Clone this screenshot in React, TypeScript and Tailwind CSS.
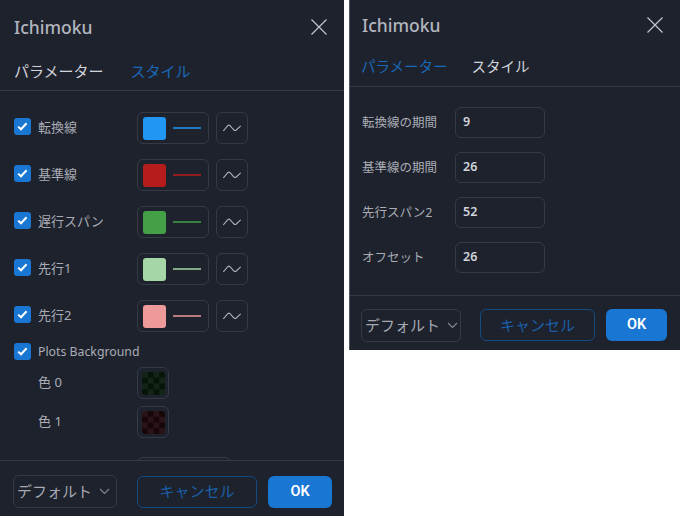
const FONT = "font-['Noto_Sans','Noto_Sans_CJK_JP',sans-serif]";

function CloseIcon() {
  return (
    <svg width="18" height="18" viewBox="0 0 18 18" fill="none" stroke="#c3c6ce" strokeWidth="1.2">
      <path d="M1.5 1.5l15 15M16.5 1.5l-15 15" />
    </svg>
  );
}

function Check({ className = "" }: { className?: string }) {
  return (
    <span className={`${className} flex h-[17px] w-[17px] items-center justify-center rounded-[3px] bg-[#1976d2]`}>
      <svg width="11" height="9" viewBox="0 0 11 9" fill="none" stroke="#ffffff" strokeWidth="2">
        <path d="M1.2 4.6l2.8 2.7 5.6-6" />
      </svg>
    </span>
  );
}

function Footer({ select, cancel, ok }: { select: string; cancel: string; ok: string }) {
  return (
    <div className="flex h-full items-center">
      <div className={`${select} flex h-[33px] items-center rounded-md border border-[#363a45] pl-[3px] text-[15px] text-[#a6a9b2]`}>
        <span className="whitespace-nowrap">デフォルト</span>
        <svg className="ml-[7px]" width="11" height="7" viewBox="0 0 11 7" fill="none" stroke="#868993" strokeWidth="1.1">
          <path d="M1 1l4.5 4.5L10 1" />
        </svg>
      </div>
      <button className={`${cancel} h-[32px] rounded-md border border-[#134a80] text-[15px] text-[#1a5fa8]`}>
        キャンセル
      </button>
      <button className={`${ok} h-[32px] rounded-md bg-[#1976d2] font-['Roboto',sans-serif] text-[14.5px] font-semibold text-white`}>
        OK
      </button>
    </div>
  );
}

function PlotRow({ label, color, mt }: { label: string; color: string; mt: string }) {
  return (
    <div className={`${mt} flex h-[32px] items-center`}>
      <Check className="mb-[3px]" />
      <span className="mb-[1px] ml-[7px] w-[99px] text-[13px] text-[#a9acb5]">{label}</span>
      <div className="flex h-[32px] w-[72px] items-center rounded-md border border-[#363a45] pl-[5px]">
        <span className="h-[23px] w-[23px] rounded-[3px]" style={{ backgroundColor: color }} />
        <span className="ml-[7px] h-[2px] w-[28px] opacity-75" style={{ backgroundColor: color }} />
      </div>
      <div className="ml-[7px] flex h-[32px] w-[32px] items-center justify-center rounded-md border border-[#363a45]">
        <svg width="18" height="8" viewBox="0 0 18 8" fill="none" stroke="#b2b5be" strokeWidth="1.1">
          <path d="M0.3 7L5 1.5Q6 0.8 7 1.6L11 6Q12 6.8 13 6.2L17.7 1.8" />
        </svg>
      </div>
    </div>
  );
}

function ColorRow({ label, mt, swatch }: { label: string; mt: string; swatch: string }) {
  return (
    <div className={`${mt} flex h-[32px] items-center`}>
      <span className="ml-[24px] w-[99px] text-[13px] text-[#a9acb5]">{label}</span>
      <div className="flex h-[32px] w-[32px] items-center justify-center rounded-md border border-[#363a45]">
        <span className={`${swatch} h-[23px] w-[23px] rounded-[3px] bg-[size:11.5px_11.5px]`} />
      </div>
    </div>
  );
}

function StylePanel() {
  return (
    <div className="flex h-[516px] w-[344px] shrink-0 flex-col bg-[#1e222d]">
      <div className="flex h-[54px] items-center justify-between pl-[14px] pr-[16px]">
        <span className="text-[17.5px] font-medium text-[#b2b5be]">Ichimoku</span>
        <CloseIcon />
      </div>
      <div className="flex h-[37px] items-center gap-[27px] border-b border-[#363a45] pb-[2px] pl-[14px] text-[15px]">
        <span className="text-[#d1d4dc]">パラメーター</span>
        <span className="text-[#1a68b8]">スタイル</span>
      </div>
      <div className="flex-1 overflow-hidden pl-[14px] pt-[21px]">
        <PlotRow label="転換線" color="#2196f3" mt="" />
        <PlotRow label="基準線" color="#b71c1c" mt="mt-[15px]" />
        <PlotRow label="遅行スパン" color="#43a047" mt="mt-[15px]" />
        <PlotRow label="先行1" color="#a5d6a7" mt="mt-[15px]" />
        <PlotRow label="先行2" color="#ef9a9a" mt="mt-[15px]" />
        <div className="mt-[11px] flex h-[17px] items-center">
          <Check />
          <span className="ml-[7px] pt-[1px] text-[12.3px] text-[#a9acb5]">Plots Background</span>
        </div>
        <ColorRow
          label="色 0"
          mt="mt-[7px]"
          swatch="bg-[repeating-conic-gradient(#071509_0_25%,#132516_0_50%)]"
        />
        <ColorRow
          label="色 1"
          mt="mt-[7px]"
          swatch="bg-[repeating-conic-gradient(#170709_0_25%,#2a1417_0_50%)]"
        />
        <div className="ml-[123px] mt-[19px] h-[32px] w-[94px] rounded-md border border-[#363a45]" />
      </div>
      <div className="h-[56px] border-t border-[#363a45] pl-[13px] pt-[6px]">
        <Footer select="w-[104px]" cancel="ml-[20px] w-[120px]" ok="ml-[11px] w-[64px]" />
      </div>
    </div>
  );
}

const PARAMS = [
  { label: "転換線の期間", value: "9" },
  { label: "基準線の期間", value: "26" },
  { label: "先行スパン2", value: "52" },
  { label: "オフセット", value: "26" },
];

function ParamsPanel() {
  return (
    <div className="flex h-[350px] w-[331px] shrink-0 flex-col border-l border-[#50535e] bg-[#1e222d]">
      <div className="flex h-[50px] items-center justify-between pl-[12px] pr-[16px]">
        <span className="text-[17.5px] font-medium text-[#b2b5be]">Ichimoku</span>
        <CloseIcon />
      </div>
      <div className="flex h-[37px] items-center gap-[24px] border-b border-[#363a45] pb-[2px] pl-[11px] text-[14.5px]">
        <span className="text-[#1a68b8]">パラメーター</span>
        <span className="text-[#d1d4dc]">スタイル</span>
      </div>
      <div className="flex flex-1 flex-col gap-[14px] pl-[12px] pt-[20px]">
        {PARAMS.map((p) => (
          <div key={p.label} className="flex h-[31px] items-center">
            <span className="w-[93px] whitespace-nowrap pt-[1px] text-[12.5px] text-[#a9acb5]">{p.label}</span>
            <div className="flex h-[31px] w-[90px] items-center rounded-md border border-[#363a45] pl-[7px] text-[12.5px] font-semibold text-[#d1d4dc]">
              {p.value}
            </div>
          </div>
        ))}
      </div>
      <div className="h-[55px] border-t border-[#363a45] pl-[11px] pt-[4px]">
        <Footer select="w-[100px]" cancel="ml-[19px] w-[115px]" ok="ml-[11px] w-[61px]" />
      </div>
    </div>
  );
}

export default function App() {
  return (
    <div className={`${FONT} flex h-[516px] w-[680px] items-start gap-[5px] overflow-hidden bg-white`}>
      <StylePanel />
      <ParamsPanel />
    </div>
  );
}
